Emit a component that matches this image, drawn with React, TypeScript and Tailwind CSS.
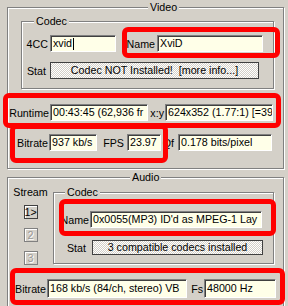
const group =
  "border border-[#808080] shadow-[inset_1px_1px_0_#ffffff,1px_1px_0_#ffffff]";
const legend = "bg-[#d4d0c8] px-[2px] leading-[14px]";
const field =
  "h-[17px] bg-[#ffffe8] border border-t-[#808080] border-l-[#808080] border-r-white border-b-white shadow-[inset_1px_1px_0_#404040] pl-[2px] leading-[15px] whitespace-nowrap overflow-hidden";
const stat =
  "border border-[#404040] bg-[repeating-conic-gradient(#d4d0c8_0_25%,#ffffff_0_50%)] bg-[length:2px_2px] text-center whitespace-pre overflow-hidden";
const red = "pointer-events-none absolute rounded-[6px] border-[5px] border-[#ff0000]";

function StreamButton({ label, active }: { label: string; active?: boolean }) {
  return (
    <div
      className={
        active
          ? "w-[14px] h-[14px] border border-[#404040] shadow-[inset_1px_1px_0_#ffffff] text-center leading-[12px]"
          : "w-[14px] h-[14px] border border-[#808080] shadow-[inset_1px_1px_0_#ffffff] text-center leading-[12px] text-[#9a9894] [text-shadow:1px_1px_0_#ffffff]"
      }
    >
      {label}
    </div>
  );
}

export default function App() {
  return (
    <div className="relative w-[288px] h-[306px] overflow-hidden bg-[#d4d0c8] pl-[7px] font-['Liberation_Sans',Arial,sans-serif] text-[10.7px] leading-[14px] text-black">
      {/* Video */}
      <fieldset className={`${group} w-[277px] pb-[17px]`}>
        <legend className={`${legend} ml-[140px]`}>Video</legend>

        <fieldset className={`${group} ml-[13px] w-[253px] pb-[9px]`}>
          <legend className={`${legend} ml-[12px]`}>Codec</legend>
          <div className="mt-[7px] flex items-center">
            <span className="w-[26px] text-right">4CC</span>
            <div className={`${field} ml-[2px] w-[66px] flex items-center`}>
              xvid
              <span className="ml-px inline-block w-px h-[12px] bg-black" />
            </div>
            <span className="w-[39px] text-right">Name</span>
            <div className={`${field} ml-[2px] w-[106px]`}>XviD</div>
          </div>
          <div className="mt-[10px] flex items-center">
            <span className="w-[24px] text-right">Stat</span>
            <div className={`${stat} ml-[4px] w-[209px] h-[17px] leading-[15px]`}>
              Codec NOT Installed!  [more info...]
            </div>
          </div>
        </fieldset>

        <div className="mt-[15px] flex items-center">
          <span className="w-[41px] text-right">Runtime</span>
          <div className={`${field} ml-px w-[98px]`}>00:43:45 (62,936 fr</div>
          <span className="w-[16px] text-right">x:y</span>
          <div className={`${field} ml-px w-[108px]`}>624x352 (1.77:1) [=39</div>
        </div>

        <div className="mt-[13px] flex items-center">
          <span className="w-[40px] text-right">Bitrate</span>
          <div className={`${field} ml-px w-[48px]`}>937 kb/s</div>
          <span className="w-[27px] text-right">FPS</span>
          <div className={`${field} ml-[3px] w-[34px]`}>23.97</div>
          <span className="w-[13px] text-right">Qf</span>
          <div className={`${field} ml-[4px] w-[94px]`}>0.178 bits/pixel</div>
        </div>
      </fieldset>

      {/* Audio */}
      <fieldset className={`${group} mt-px w-[277px] pb-[20px]`}>
        <legend className={`${legend} ml-[122px]`}>Audio</legend>

        <div className="flex items-start">
          <div className="w-[45px] flex flex-col items-center">
            <span className="mt-px">Stream</span>
            <div className="mt-[6px]">
              <StreamButton label="1>" active />
            </div>
            <div className="mt-[9px]">
              <StreamButton label="2" />
            </div>
            <div className="mt-[9px]">
              <StreamButton label="3" />
            </div>
          </div>

          <fieldset className={`${group} mt-px w-[221px] pb-[8px]`}>
            <legend className={`${legend} ml-[11px]`}>Codec</legend>
            <div className="mt-[12px] flex items-center">
              <span className="w-[35px] text-right">Name</span>
              <div className={`${field} ml-px w-[172px]`}>
                0x0055(MP3) ID'd as MPEG-1 Lay
              </div>
            </div>
            <div className="mt-[12px] flex items-center">
              <span className="w-[32px] text-right">Stat</span>
              <div className={`${stat} ml-[6px] w-[171px] h-[15px] leading-[13px]`}>
                3 compatible codecs installed
              </div>
            </div>
          </fieldset>
        </div>

        <div className="mt-[14px] flex items-center">
          <span className="w-[38px] text-right">Bitrate</span>
          <div className={`${field} ml-px w-[140px] h-[19px] leading-[17px]`}>
            168 kb/s (84/ch, stereo) VB
          </div>
          <span className="w-[16px] text-right">Fs</span>
          <div className={`${field} ml-px w-[72px] h-[19px] leading-[17px]`}>48000 Hz</div>
        </div>
      </fieldset>

      {/* highlight boxes */}
      <div className={`${red} left-[122px] top-[27px] w-[158px] h-[31px]`} />
      <div className={`${red} left-[3px] top-[93px] w-[278px] h-[35px]`} />
      <div className={`${red} left-[10px] top-[124px] w-[158px] h-[39px]`} />
      <div className={`${red} left-[59px] top-[199px] w-[217px] h-[37px]`} />
      <div className={`${red} left-[10px] top-[268px] w-[275px] h-[37px]`} />
    </div>
  );
}
